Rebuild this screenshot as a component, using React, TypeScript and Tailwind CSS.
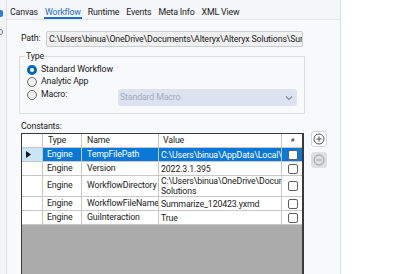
import React from "react";

const font = { fontFamily: 'Roboto, "Noto Sans", sans-serif', letterSpacing: "-0.15px" };

interface ConstantRow {
  type: string;
  name: string;
  value: string[];
  tall?: boolean;
}

const rows: ConstantRow[] = [
  { type: "Engine", name: "TempFilePath", value: ["C:\\Users\\binua\\AppData\\Local\\Temp\\"] },
  { type: "Engine", name: "Version", value: ["2022.3.1.395"] },
  {
    type: "Engine",
    name: "WorkflowDirectory",
    value: ["C:\\Users\\binua\\OneDrive\\Documents\\Alteryx\\Alteryx", "Solutions"],
    tall: true,
  },
  { type: "Engine", name: "WorkflowFileName", value: ["Summarize_120423.yxmd"] },
  { type: "Engine", name: "GuiInteraction", value: ["True"] },
];

const tabs = ["Canvas", "Workflow", "Runtime", "Events", "Meta Info", "XML View"];

function Radio({ checked }: { checked?: boolean }) {
  return checked ? (
    <span className="w-[10px] h-[10px] rounded-full border-[3px] border-[#0067c0] bg-white shrink-0" />
  ) : (
    <span className="w-[10px] h-[10px] rounded-full border border-[#6b6b6b] bg-[#f3f3f3] shrink-0" />
  );
}

function Check() {
  return <span className="block w-[10px] h-[10px] rounded-[2px] border border-[#5f5f5f] bg-white" />;
}

export default function App() {
  return (
    <div className="w-[400px] h-[274px] overflow-hidden flex bg-white text-[8.8px] text-[#1b1b1b]" style={font}>
      {/* edge of the neighbouring panel */}
      <div className="w-[7px] shrink-0 bg-[#f3f4f6] border-r border-[#dfe2e8] flex flex-col items-start">
        <span className="mt-[10px] w-[3px] h-[7px] rounded-r-[2px] bg-[#2f7de1]" />
        <span className="mt-[12px] w-[3px] h-[6px] rounded-r-full border border-l-0 border-[#8a8a8a]" />
      </div>

      <div className="w-[334px] shrink-0 bg-[#f8f9fb] border-r border-[#dde1e8] flex flex-col">
        <div className="h-[20px] flex items-start gap-[5px] pl-[2px] pr-[6px] border-b border-[#e2e5eb] bg-[#f4f6f9]">
          {tabs.map((t) => (
            <div
              key={t}
              className={
                t === "Workflow"
                  ? "h-[19px] pt-[7px] px-[1px] leading-[10px] text-[#1a6fc4] border-b-2 border-[#1a6fc4]"
                  : "h-[19px] pt-[7px] px-[1px] leading-[10px]"
              }
            >
              {t}
            </div>
          ))}
        </div>

        <div className="flex items-center mt-[11px] pl-[14px]">
          <span className="w-[25px]">Path:</span>
          <div className="w-[257px] h-[16px] bg-[#f0f0f0] border border-[#c9ccd1] rounded-[2px] px-[2px] leading-[14px] whitespace-nowrap overflow-hidden">
            C:\Users\binua\OneDrive\Documents\Alteryx\Alteryx Solutions\Summarize_120423.yxmd
          </div>
        </div>

        <fieldset className="ml-[12px] mt-[3px] w-[285px] h-[64px] border border-[#dadde3] pl-[7px] pr-[7px] pt-[3px]">
          <legend className="px-[1px] ml-[-2px] leading-[12px]">Type</legend>
          <div className="flex flex-col gap-[2px]">
            <label className="flex items-center gap-[4px] h-[10px]">
              <Radio checked />
              <span>Standard Workflow</span>
            </label>
            <label className="flex items-center gap-[4px] h-[10px]">
              <Radio />
              <span>Analytic App</span>
            </label>
            <label className="flex items-center gap-[4px] h-[12px]">
              <Radio />
              <span className="w-[73px]">Macro:</span>
              <div className="w-[179px] h-[17px] mt-[5px] rounded-[3px] bg-[#dde3ee] flex items-center justify-between pl-[2px] pr-[4px] text-[#a3aabb]">
                <span>Standard Macro</span>
                <svg width="8" height="6" viewBox="0 0 8 6">
                  <path d="M1 1.5 L4 4.5 L7 1.5" fill="none" stroke="#7d8aa3" strokeWidth="1.1" />
                </svg>
              </div>
            </label>
          </div>
        </fieldset>

        <div className="pl-[14px] mt-[6px] leading-[12px]">Constants:</div>

        <div className="flex pl-[14px] mt-[1px] flex-1 min-h-0">
          <div className="w-[283px] flex flex-col border-l border-t border-[#3a3a3a] border-r-2 bg-[#ababab]">
            <div className="grid grid-cols-[21px_39px_77px_123px_21px] h-[14px] bg-white border-b border-[#c7c7c7] leading-[13px]">
              <div className="border-r border-[#c7c7c7]" />
              <div className="border-r border-[#c7c7c7] pl-[5px]">Type</div>
              <div className="border-r border-[#c7c7c7] pl-[5px]">Name</div>
              <div className="border-r border-[#c7c7c7] pl-[4px]">Value</div>
              <div className="flex justify-center text-[6px] leading-[12px]">#</div>
            </div>
            {rows.map((r, i) => {
              const sel = i === 0;
              return (
                <div
                  key={r.name}
                  className={
                    (r.tall ? "h-[21px] " : "h-[14px] ") +
                    "grid grid-cols-[21px_39px_77px_123px_21px] border-b border-[#c7c7c7] " +
                    (sel ? "bg-[#0a78d6] text-white" : "bg-white")
                  }
                >
                  <div className={"border-r border-[#c7c7c7] flex items-center pl-[4px] " + (sel ? "bg-[#cce4f7]" : "bg-white")}>
                    {sel && (
                      <svg width="5" height="7" viewBox="0 0 5 7">
                        <path d="M0 0 L5 3.5 L0 7 Z" fill="#111" />
                      </svg>
                    )}
                  </div>
                  <div className="border-r border-[#c7c7c7] pl-[4px] flex items-center">{r.type}</div>
                  <div className="border-r border-[#c7c7c7] pl-[5px] flex items-center whitespace-nowrap overflow-hidden">{r.name}</div>
                  <div className="border-r border-[#c7c7c7] pl-[2px] flex flex-col justify-center overflow-hidden leading-[10px]">
                    {r.value.map((v) => (
                      <span key={v} className="whitespace-nowrap">
                        {v}
                      </span>
                    ))}
                  </div>
                  <div className="flex items-center justify-center">
                    <Check />
                  </div>
                </div>
              );
            })}
          </div>
          <div className="flex flex-col gap-[5px] ml-[7px] mt-[-2px]">
            <div className="w-[16px] h-[16px] rounded-[3px] border border-[#d4d8de] bg-white flex items-center justify-center">
              <svg width="12" height="12" viewBox="0 0 12 12">
                <circle cx="6" cy="6" r="5" fill="none" stroke="#555" strokeWidth="1" />
                <path d="M6 3.3 V8.7 M3.3 6 H8.7" stroke="#555" strokeWidth="1" />
              </svg>
            </div>
            <div className="w-[16px] h-[16px] rounded-[3px] bg-[#dedfe1] flex items-center justify-center">
              <svg width="12" height="12" viewBox="0 0 12 12">
                <circle cx="6" cy="6" r="5" fill="none" stroke="#9a9a9a" strokeWidth="1" />
                <path d="M3.3 6 H8.7" stroke="#9a9a9a" strokeWidth="1" />
              </svg>
            </div>
          </div>
        </div>
      </div>

      <div className="flex-1 bg-white" />
    </div>
  );
}
